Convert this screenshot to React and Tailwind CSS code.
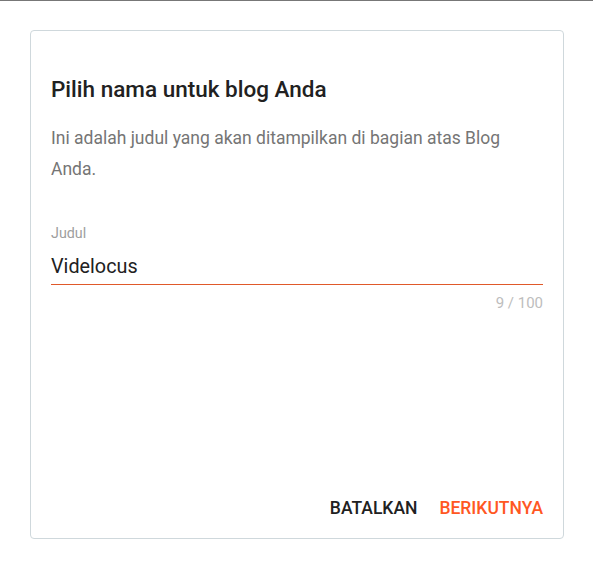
import React from 'react';

const App = () => {
  return <div className="w-[593px] h-[569px] bg-white border-t border-[#777777] font-['Roboto',sans-serif]">
      <div className="pt-[29px] pl-[30px]">
        <div className="w-[534px] h-[509px] border border-[#cfd8dc] rounded-[4px] flex flex-col justify-between px-5 pt-[43px] pb-[20px]">
          <div>
            <h2 className="text-[22.5px] leading-[30px] font-medium text-[#212121]">Pilih nama untuk blog Anda</h2>
            <p className="mt-[19px] text-[17.5px] leading-[31px] text-[#757575]">
              Ini adalah judul yang akan ditampilkan di bagian atas Blog Anda.
            </p>
            <div className="mt-[39px]">
              <label className="block text-[14.3px] leading-[18px] text-[#9e9e9e]">Judul</label>
              <div className="mt-[13px] pb-[5px] border-b border-[#e0592a] text-[19.8px] leading-[24px] text-[#212121]">Videlocus</div>
              <div className="mt-[9px] text-right text-[15px] leading-[18px] text-[#bdbdbd]">9 / 100</div>
            </div>
          </div>
          <div className="flex justify-end items-center gap-[22px] text-[17.5px] leading-[20px] font-medium">
            <button className="text-[#212121]">BATALKAN</button>
            <button className="text-[#ff5722]">BERIKUTNYA</button>
          </div>
        </div>
      </div>
    </div>;
};

export default App;
